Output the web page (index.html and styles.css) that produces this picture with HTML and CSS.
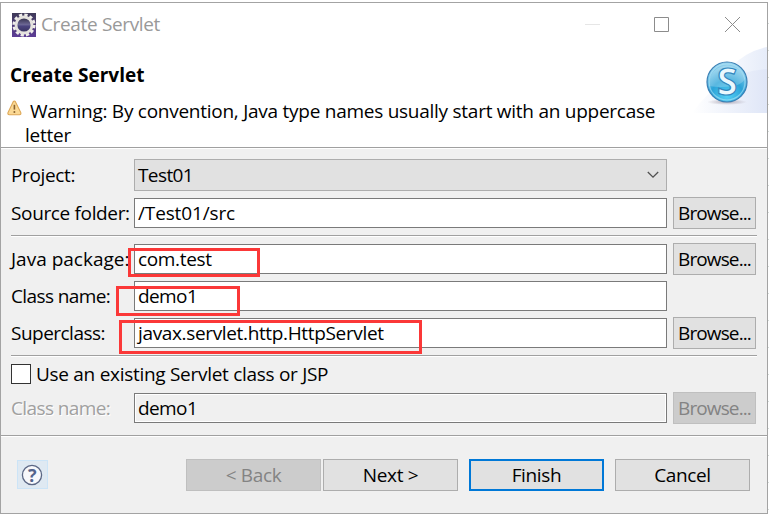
FILE: index.html
```html
<!DOCTYPE html>
<html lang="en">
<head>
<meta charset="utf-8">
<title>Create Servlet</title>
<link rel="stylesheet" href="styles.css">
</head>
<body>
<div class="window">
  <div class="titlebar">
    <svg class="app-icon" width="24" height="24" viewBox="0 0 24 24">
      <defs><linearGradient id="app" x1="0" y1="0" x2="0" y2="1"><stop offset="0" stop-color="#3f3a58"/><stop offset="1" stop-color="#5d3d96"/></linearGradient>
      <linearGradient id="orb" x1="0" y1="0" x2="0" y2="1"><stop offset="0" stop-color="#2a2740"/><stop offset=".5" stop-color="#6f6a98"/><stop offset=".55" stop-color="#4c4580"/><stop offset="1" stop-color="#35305c"/></linearGradient></defs>
      <rect width="24" height="24" fill="url(#app)"/>
      <circle cx="12" cy="12" r="10.1" fill="none" stroke="#efeeea" stroke-width="3" stroke-dasharray="3.2 2.09"/>
      <circle cx="12" cy="12" r="8" fill="url(#orb)" stroke="#e4e2de" stroke-width="2.8"/>
    </svg>
    <span class="title">Create Servlet</span>
    <svg class="controls" width="156" height="16" viewBox="0 0 156 16" fill="none">
      <path d="M0 7.5h15" stroke="#e6e6e6"/>
      <path d="M69.5.5h14v14h-14z" stroke="#8c8c8c"/>
      <path d="M140 0l15 15M155 0l-15 15" stroke="#8c8c8c"/>
    </svg>
  </div>
  <div class="banner">
    <div class="messages">
      <h1>Create Servlet</h1>
      <div class="warning">
        <svg width="15" height="16" viewBox="0 0 15 16"><path d="M6.2 1.7Q7.3.2 8.4 1.7L13.8 12.6Q14.3 14.6 12.4 14.8H2.4Q.4 14.6 1 12.6z" fill="#fbd995" stroke="#dda755" stroke-width="1.1"/><path d="M7.4 4.8v4.8" stroke="#8a6330" stroke-width="1.6"/><circle cx="7.4" cy="12" r="1" fill="#8a6330"/></svg>
        <p><span class="first">Warning: By convention, Java type names usually start with an uppercase</span><br>letter</p>
      </div>
    </div>
    <svg class="badge" width="75" height="66" viewBox="0 0 75 66">
      <defs>
        <linearGradient id="sky" x1="0" x2="1"><stop offset="0" stop-color="#fff"/><stop offset="1" stop-color="#dfe6f7"/></linearGradient>
        <linearGradient id="sky2" x1="0" x2="1"><stop offset="0" stop-color="#f8fafe"/><stop offset="1" stop-color="#e6ecf9"/></linearGradient>
        <radialGradient id="ball" cx=".5" cy=".85" r=".8"><stop offset="0" stop-color="#55d0f5"/><stop offset=".5" stop-color="#2ba3d8"/><stop offset="1" stop-color="#96d3ee"/></radialGradient>
        <radialGradient id="shade"><stop offset="0" stop-color="#998f9e" stop-opacity=".7"/><stop offset="1" stop-color="#998f9e" stop-opacity="0"/></radialGradient>
      </defs>
      <path d="M40 19Q55 4 75 0V66H35z" fill="url(#sky2)"/>
      <path d="M0 66Q30 24 75 22V66z" fill="url(#sky)"/>
      <ellipse cx="35" cy="55" rx="20" ry="3" fill="url(#shade)"/>
      <circle cx="35" cy="35" r="20" fill="url(#ball)" stroke="#3b7fb4" stroke-width="1.2"/>
      <path d="M17 39A18.4 18.4 0 0 1 53 32Q49 38 41 39Q28 41 17 39z" fill="#fff" opacity=".22"/>
      <circle cx="35" cy="35" r="18" fill="none" stroke="#b7e6f8" stroke-opacity=".55" stroke-width="1.2"/>
      <text class="glyph" x="35" y="48" text-anchor="middle">S</text>
    </svg>
  </div>

  <div class="rule edge"></div>
  <div class="form">
    <div class="row">
      <label>Project:</label>
      <div class="combo"><span class="tight">Test01</span><svg width="12" height="8" viewBox="0 0 12 8"><path d="M.8 1L6 6.2 11.2 1" fill="none" stroke="#505050" stroke-width="1.3"/></svg></div>
    </div>
    <div class="row">
      <label>Source folder:</label><div class="field path">/Test01/src</div><div class="button browse">Browse...</div>
    </div>
    <div class="rule"></div>
    <div class="row">
      <label class="package">Java package:</label><div class="field">com.test<i class="mark m-package"></i></div><div class="button browse">Browse...</div>
    </div>
    <div class="row short">
      <label class="tight">Class name:</label><div class="field"><span class="tight">demo1</span><i class="mark m-class"></i></div>
    </div>
    <div class="row">
      <label class="super">Superclass:</label><div class="field">javax.servlet.http.HttpServlet<i class="mark m-super"></i></div><div class="button browse">Browse...</div>
    </div>
    <div class="rule"></div>
    <div class="check"><span class="box"></span><span>Use an existing Servlet class or JSP</span></div>
    <div class="row">
      <label class="tight off">Class name:</label><div class="field readonly"><span class="tight">demo1</span></div><div class="button browse disabled">Browse...</div>
    </div>
  </div>
  <div class="rule edge"></div>
  <div class="footer">
    <div class="help"><svg width="22" height="22" viewBox="0 0 22 22"><circle cx="11" cy="11" r="9.6" fill="#f7f8fb" stroke="#5b6785" stroke-width="1.3"/><text class="question" x="11" y="17.5" text-anchor="middle">?</text></svg></div>
    <div class="button back disabled">&lt; Back</div>
    <div class="button next">Next &gt;</div>
    <div class="button finish">Finish</div>
    <div class="button cancel">Cancel</div>
  </div>
</div>
</body>
</html>
```
FILE: styles.css
```css
* { box-sizing: border-box; }
body {
  margin: 0;
  padding-top: 2px;
  height: 516px;
  overflow: hidden;
  background: repeating-linear-gradient(#fff 0 23px, #d5dcd9 23px 24px, #fff 24px 27px);
  color: #000;
  font: 19px/24px "Open Sans", "Noto Sans", sans-serif;
  letter-spacing: -0.35px;
  white-space: nowrap;
}
.window {
  width: 768px;
  height: 512px;
  border: 1px solid #a3a3a3;
  background: #f0f0f0;
  box-shadow: 0 -2px #fff, 0 2px #fff;
}
.titlebar {
  display: flex;
  align-items: center;
  height: 43px;
  padding: 0 26px 0 11px;
  background: #fff;
}
.title { margin: -2px 0 0 5px; color: #999; }
.controls { margin-left: auto; }
.banner {
  display: flex;
  justify-content: space-between;
  height: 101px;
  background: #fff;
}
h1 {
  margin: 16px 0 0 9px;
  font-size: 19px;
  line-height: 26px;
  font-weight: 700;
  letter-spacing: 0.02px;
}
.warning { display: flex; margin: 11px 0 0 6px; }
.warning svg { margin-top: 1px; }
.warning p { margin: 0 0 0 3px; letter-spacing: -0.26px; }
.first { margin-left: 5px; }
.badge { margin-top: 1px; }
.glyph {
  font: 700 37px "Open Sans", sans-serif;
  fill: #eaf8fe;
  stroke: #3187be;
  stroke-width: 1.2px;
}
.form { padding: 10px 10px 11px; display: flex; flex-direction: column; gap: 6px; }
.rule { height: 2px; background: #a0a0a0; border-bottom: 1px solid #fff; }
.edge { width: 766px; }
.row { display: flex; align-items: center; height: 32px; }
.short { height: 30px; }
label { width: 123px; }
.combo, .field { width: 533px; padding: 0 3px; display: flex; align-items: center; }
.combo {
  height: 32px;
  justify-content: space-between;
  padding-right: 7px;
  border: 1px solid #adadad;
  background: #e1e1e1;
}
.field {
  position: relative;
  height: 30px;
  margin-right: 6px;
  border: 1px solid #7a7a7a;
  background: #fff;
}
.readonly { background: #f0f0f0; box-shadow: inset 0 0 0 1px #fff; }
.path { letter-spacing: -0.14px; }
.tight { letter-spacing: -0.6px; }
.super { letter-spacing: -0.52px; }
.package { letter-spacing: 0; }
.off { color: #a0a0a0; text-shadow: 1px 1px #fff; }
.mark { position: absolute; border: 3px solid #fb3838; }
.m-package { left: -7px; top: 3px; width: 132px; height: 29px; }
.m-class { left: -19px; top: 4px; width: 124px; height: 30px; }
.m-super { left: -16px; top: 1px; width: 303px; height: 34px; }
.check { display: flex; align-items: center; gap: 5px; height: 23px; padding-bottom: 2px; letter-spacing: -0.29px; }
.box { width: 20px; height: 20px; margin-top: 1px; border: 1px solid #333; background: #fff; }
.button {
  display: flex;
  align-items: center;
  justify-content: center;
  width: 135px;
  height: 32px;
  border: 1px solid #adadad;
  background: #e1e1e1;
}
.browse { width: 83px; letter-spacing: -0.88px; }
.disabled { border-color: #bfbfbf; background: #ccc; color: #838383; }
.footer { display: flex; align-items: center; height: 76px; padding-left: 16px; }
.help {
  display: flex;
  align-items: center;
  width: 31px;
  height: 29px;
  margin-top: -1px;
  padding-left: 3px;
  border: 1px solid #cce4f7;
  background: #dfe9f2;
}
.question { font: 700 18px "Open Sans", sans-serif; fill: #54648c; }
.back { margin-left: 138px; }
.next { margin-left: 2px; }
.finish { margin-left: 11px; border: 2px solid #0078d7; }
.cancel { margin-left: 11px; }
```
